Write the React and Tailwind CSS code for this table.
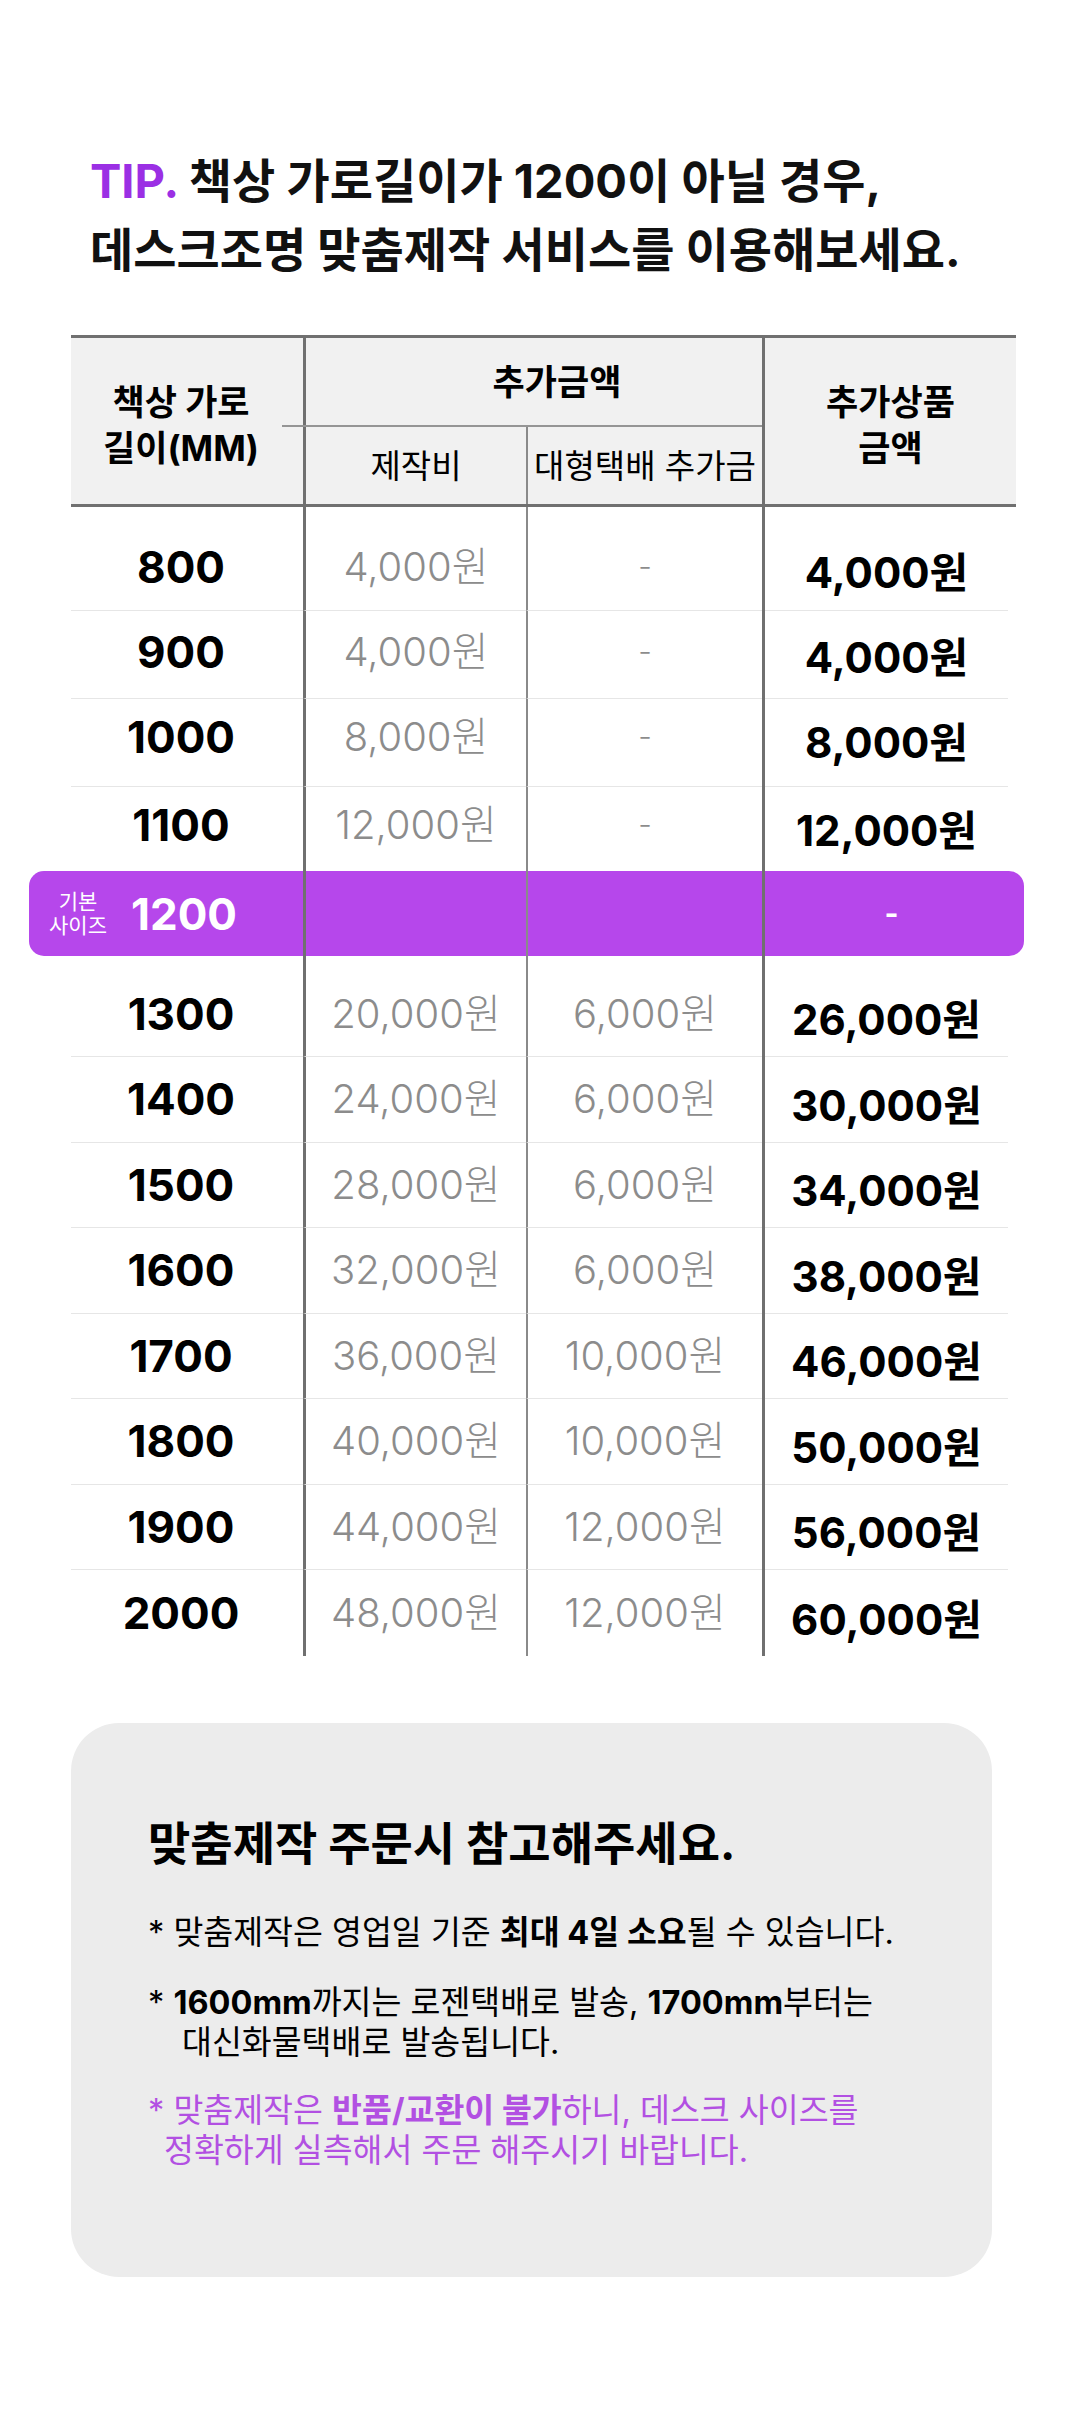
const rowsTop = [
  { len: '800', make: '4,000원', ship: '-', total: '4,000원', h: 'h-[88px]', pad: 'pb-0', line: true },
  { len: '900', make: '4,000원', ship: '-', total: '4,000원', h: 'h-[88px]', pad: 'pb-[6px]', line: true },
  { len: '1000', make: '8,000원', ship: '-', total: '8,000원', h: 'h-[88px]', pad: 'pb-[12px]', line: true },
  { len: '1100', make: '12,000원', ship: '-', total: '12,000원', h: 'h-[84px]', pad: 'pb-[10px]', line: false },
];

const rowsBottom = [
  { len: '1300', make: '20,000원', ship: '6,000원', total: '26,000원' },
  { len: '1400', make: '24,000원', ship: '6,000원', total: '30,000원' },
  { len: '1500', make: '28,000원', ship: '6,000원', total: '34,000원' },
  { len: '1600', make: '32,000원', ship: '6,000원', total: '38,000원' },
  { len: '1700', make: '36,000원', ship: '10,000원', total: '46,000원' },
  { len: '1800', make: '40,000원', ship: '10,000원', total: '50,000원' },
  { len: '1900', make: '44,000원', ship: '12,000원', total: '56,000원' },
  { len: '2000', make: '48,000원', ship: '12,000원', total: '60,000원' },
];

function Row({ len, make, ship, total, h, pad, line }) {
  const sep = line ? 'border-b border-b-[#e6e6e6]' : '';
  return (
    <div className={`grid grid-cols-[232px_223px_236px_254px] ${h}`}>
      <div className={`flex items-center justify-center pr-3 ${pad} ${sep} text-[44px] font-bold text-black`}>
        {len}
      </div>
      <div className={`flex items-center justify-center ${pad} border-l-[3px] border-l-[#707070] ${sep} text-[40px] font-light text-[#8c8c8c]`}>
        {make}
      </div>
      <div className={`flex items-center justify-center ${pad} border-l-2 border-l-[#8a8a8a] ${sep} ${ship === '-' ? 'text-[30px]' : 'text-[40px]'} font-light text-[#8c8c8c]`}>
        {ship}
      </div>
      <div className="flex border-l-[3px] border-l-[#707070]">
        <div className={`flex-1 mr-[8px] flex items-center justify-center pt-[12px] ${pad} ${sep} text-[42px] font-bold text-black`}>
          {total}
        </div>
      </div>
    </div>
  );
}

function Spacer({ h }) {
  return (
    <div className={`grid grid-cols-[232px_223px_236px_254px] ${h}`}>
      <div />
      <div className="border-l-[3px] border-l-[#707070]" />
      <div className="border-l-2 border-l-[#8a8a8a]" />
      <div className="border-l-[3px] border-l-[#707070]" />
    </div>
  );
}

export default function App() {
  return (
    <div
      className="min-h-screen w-[1080px] bg-white text-[#111] pb-[134px]"
      style={{ fontFamily: 'Inter, "Noto Sans CJK KR", sans-serif' }}
    >
      {/* TIP */}
      <div className="pt-[146px] pl-[90px] text-[47px] font-bold leading-[69px]">
        <p>
          <span className="text-[#9b2fe4]">TIP.</span> 책상 가로길이가 1200이 아닐 경우,
        </p>
        <p>데스크조명 맞춤제작 서비스를 이용해보세요.</p>
      </div>

      {/* 표 */}
      <div className="mt-[51px] ml-[71px] w-[945px]">
        <div className="flex h-[172px] bg-[#f1f1f1] border-t-[3px] border-b-[3px] border-[#707070] text-[35px] font-bold leading-[46px] text-black">
          <div className="w-[232px] flex flex-col items-center justify-center pr-3 pt-2 text-center">
            <span>책상 가로</span>
            <span>길이(MM)</span>
          </div>
          <div className="w-[459px] flex flex-col border-l-[3px] border-l-[#707070]">
            <div className="h-[87px] flex items-center justify-center pl-[46px]">추가금액</div>
            <div className="h-[2px] bg-[#959595] -ml-[24px]" />
            <div className="flex-1 flex text-[33px] font-normal">
              <div className="w-[220px] flex items-center justify-center">제작비</div>
              <div className="flex-1 flex items-center justify-center border-l-2 border-l-[#8a8a8a]">
                대형택배 추가금
              </div>
            </div>
          </div>
          <div className="flex-1 flex flex-col items-center justify-center pt-2 border-l-[3px] border-l-[#707070]">
            <span>추가상품</span>
            <span>금액</span>
          </div>
        </div>

        <Spacer h="h-[16px]" />
        {rowsTop.map((r) => (
          <Row key={r.len} {...r} />
        ))}

        {/* 기본 사이즈 */}
        <div className="-ml-[42px] -mr-[8px] grid grid-cols-[274px_223px_236px_262px] h-[85px] rounded-[15px] bg-[#b647eb] text-white">
          <div className="flex items-center">
            <div className="ml-[14px] w-[70px] flex flex-col items-center text-[21px] leading-[24px] font-normal">
              <span>기본</span>
              <span>사이즈</span>
            </div>
            <span className="ml-[18px] text-[44px] font-bold">1200</span>
          </div>
          <div className="border-l-[3px] border-l-[#707070]" />
          <div className="border-l-2 border-l-[#8a8a8a]" />
          <div className="flex items-center justify-center pr-[6px] border-l-[3px] border-l-[#707070] text-[30px] font-bold">
            -
          </div>
        </div>

        <Spacer h="h-[15.5px]" />
        {rowsBottom.map((r, i) => (
          <Row
            key={r.len}
            {...r}
            h={i === rowsBottom.length - 1 ? 'h-[86px]' : 'h-[85.5px]'}
            pad="pb-0"
            line={i !== rowsBottom.length - 1}
          />
        ))}
      </div>

      {/* 안내 */}
      <div className="mt-[67px] ml-[71px] w-[921px] h-[554px] rounded-[48px] bg-[#ececec] pt-[92px] pl-[77px] text-black">
        <h2 className="text-[46px] font-bold leading-[56px]">맞춤제작 주문시 참고해주세요.</h2>
        <p className="mt-[42px] text-[32.5px] leading-[40px]">
          * 맞춤제작은 영업일 기준 <b className="font-bold">최대 4일 소요</b>될 수 있습니다.
        </p>
        <p className="mt-[30px] pl-[34px] -indent-[34px] text-[32.5px] leading-[40px]">
          * <b className="font-bold">1600mm</b>까지는 로젠택배로 발송, <b className="font-bold">1700mm</b>부터는
          <br />
          대신화물택배로 발송됩니다.
        </p>
        <p className="mt-[28px] pl-[16px] -indent-[16px] text-[32.5px] leading-[40px] text-[#b250e2]">
          * 맞춤제작은 <b className="font-bold">반품/교환이 불가</b>하니, 데스크 사이즈를
          <br />
          정확하게 실측해서 주문 해주시기 바랍니다.
        </p>
      </div>
    </div>
  );
}
